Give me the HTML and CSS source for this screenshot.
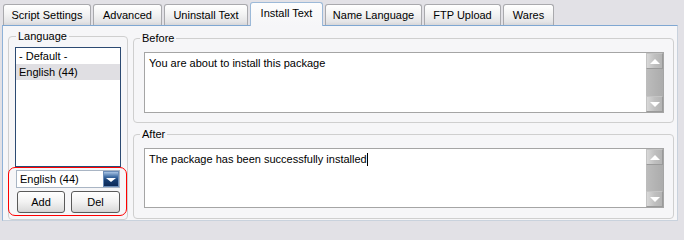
FILE: index.html
```html
<!DOCTYPE html>
<html>
<head>
<meta charset="utf-8">
<link rel="stylesheet" href="styles.css">
</head>
<body>
<div class="window">
  <div class="tabs">
    <div class="tab tab-script">Script Settings</div>
    <div class="tab tab-advanced">Advanced</div>
    <div class="tab tab-uninstall">Uninstall Text</div>
    <div class="tab tab-install active">Install Text</div>
    <div class="tab tab-name">Name Language</div>
    <div class="tab tab-ftp">FTP Upload</div>
    <div class="tab tab-wares">Wares</div>
  </div>
  <div class="panel">
    <fieldset class="group group-lang">
      <legend>Language</legend>
      <div class="listbox">
        <div class="item">- Default -</div>
        <div class="item selected">English (44)</div>
      </div>
      <div class="highlight">
        <div class="combo">
          <span class="combo-text">English (44)</span>
          <span class="combo-btn"><span class="arrow-down-w"></span></span>
        </div>
        <div class="btn-row">
          <button class="btn btn-add">Add</button>
          <button class="btn btn-del">Del</button>
        </div>
      </div>
    </fieldset>
    <div class="right">
      <fieldset class="group group-before">
        <legend>Before</legend>
        <div class="textbox tb-before">
          <div class="tb-text">You are about to install this package</div>
          <div class="scroll">
            <div class="sb-btn"><span class="tri-up"></span></div>
            <div class="sb-track"></div>
            <div class="sb-btn"><span class="tri-down"></span></div>
          </div>
        </div>
      </fieldset>
      <fieldset class="group group-after">
        <legend>After</legend>
        <div class="textbox tb-after">
          <div class="tb-text">The package has been successfully installed<span class="caret"></span></div>
          <div class="scroll">
            <div class="sb-btn"><span class="tri-up"></span></div>
            <div class="sb-track"></div>
            <div class="sb-btn"><span class="tri-down"></span></div>
          </div>
        </div>
      </fieldset>
    </div>
  </div>
</div>
</body>
</html>
```

FILE: styles.css
```css
* { box-sizing: border-box; }
html, body { margin: 0; padding: 0; }
body {
  width: 684px;
  height: 231px;
  background: #e2e1e6;
  font-family: "Liberation Sans", Arial, sans-serif;
  font-size: 11px;
  color: #000;
  overflow: hidden;
}
.window { padding: 0 6px 0 2px; }

.tabs {
  display: flex;
  align-items: flex-end;
  gap: 2px;
  height: 25px;
  padding-left: 1px;
  position: relative;
  z-index: 2;
}
.tab {
  height: 21px;
  border: 1px solid #a9a9ad;
  border-bottom: none;
  border-radius: 3px 3px 0 0;
  background: linear-gradient(#ffffff, #f3f3f3 45%, #e4e4e6 85%, #d6d6d9);
  display: flex;
  align-items: center;
  justify-content: center;
  padding-bottom: 1px;
  white-space: nowrap;
}
.tab.active {
  height: 24px;
  margin-bottom: -1px;
  border-color: #9cb9d8;
  background: linear-gradient(#fdfdfd, #f8f8f9 60%, #f6f6f8);
  padding-bottom: 4px;
}
.tab-script { width: 88px; }
.tab-advanced { width: 69px; }
.tab-uninstall { width: 84px; }
.tab-install { width: 73px; }
.tab-name { width: 97px; }
.tab-ftp { width: 77px; }
.tab-wares { width: 51px; }

.panel {
  height: 196px;
  border: 1px solid #c9d2dd;
  border-top-color: #7fa7d2;
  border-left-color: #8fb2d8;
  background: #f6f6f8;
  display: flex;
  gap: 5px;
  padding: 4px 3px 0 5px;
}

.group {
  margin: 0;
  border: 1px solid #cfcfcf;
  border-radius: 4px;
  min-width: 0;
}
.group legend {
  padding: 0 2px;
  line-height: 13px;
  height: 13px;
}

.group-lang {
  width: 120px;
  height: 190px;
  padding: 0 6px 0 6px;
}
.group-lang legend { margin-left: 1px; }

.listbox {
  margin-top: 4px;
  height: 120px;
  border: 1px solid #2c4a72;
  background: #fff;
}
.item {
  height: 16px;
  line-height: 16px;
  padding-left: 3px;
}
.item.selected { background: #e0dfe3; }

.highlight {
  margin: 0 -6px 0 -7px;
  border: 1px solid #ff0000;
  border-radius: 7px;
  padding: 2px 6px 2px 7px;
}
.combo {
  height: 18px;
  border: 1px solid #a9b5c4;
  background: #fff;
  display: flex;
  align-items: center;
  justify-content: space-between;
}
.combo-text { padding-left: 3px; }
.combo-btn {
  width: 16px;
  height: 16px;
  background: linear-gradient(#a8c4e4, #3c6aa2 35%, #163c70 60%, #0d2a58);
  border: 1px solid #6a8cb8;
  display: flex;
  align-items: center;
  justify-content: center;
}
.arrow-down-w {
  width: 0; height: 0;
  border-left: 5px solid transparent;
  border-right: 5px solid transparent;
  border-top: 4px solid #fff;
  margin-top: 2px;
}

.btn-row {
  margin-top: 3px;
  display: flex;
  justify-content: space-between;
  padding-left: 1px;
}
.btn {
  height: 22px;
  font-family: "Liberation Sans", Arial, sans-serif;
  font-size: 11px;
  color: #000;
  border: 1px solid #5a5a5a;
  border-radius: 3px;
  background: linear-gradient(#ffffff, #f2f2f2 50%, #dedede 90%, #cfcfcf);
  padding: 0;
}
.btn-add { width: 48px; }
.btn-del { width: 49px; }

.right {
  flex: 1;
  display: flex;
  flex-direction: column;
  gap: 5px;
  padding-top: 2px;
}
.group-before, .group-after {
  padding: 0 9px 0 10px;
}
.group-before legend, .group-after legend { margin-left: -4px; }
.group-before { padding-bottom: 9px; }
.group-after { padding-bottom: 10px; }

.textbox {
  margin-top: 7px;
  border: 1px solid #a5a5a5;
  background: #fff;
  display: flex;
  justify-content: space-between;
}
.tb-before { height: 61px; }
.tb-after { height: 60px; }
.tb-text {
  padding: 4px 0 0 4px;
  line-height: 13px;
  white-space: nowrap;
}
.caret {
  display: inline-block;
  width: 1px;
  height: 13px;
  background: #000;
  vertical-align: top;
}

.scroll {
  width: 17px;
  display: flex;
  flex-direction: column;
  background: #b6b6b6;
}
.sb-btn {
  height: 16px;
  border: 1px solid #c4c4c4;
  border-right-color: #9a9a9a;
  border-bottom-color: #9a9a9a;
  background: linear-gradient(90deg, #d8d8d8, #c0c0c0 50%, #b4b4b4);
  display: flex;
  align-items: center;
  justify-content: center;
}
.sb-track {
  flex: 1;
  background: linear-gradient(90deg, #bdbdbd, #b4b4b4 50%, #acacac);
}
.tri-up {
  width: 0; height: 0;
  border-left: 5px solid transparent;
  border-right: 5px solid transparent;
  border-bottom: 5px solid #fff;
}
.tri-down {
  width: 0; height: 0;
  border-left: 5px solid transparent;
  border-right: 5px solid transparent;
  border-top: 5px solid #fff;
}
```
